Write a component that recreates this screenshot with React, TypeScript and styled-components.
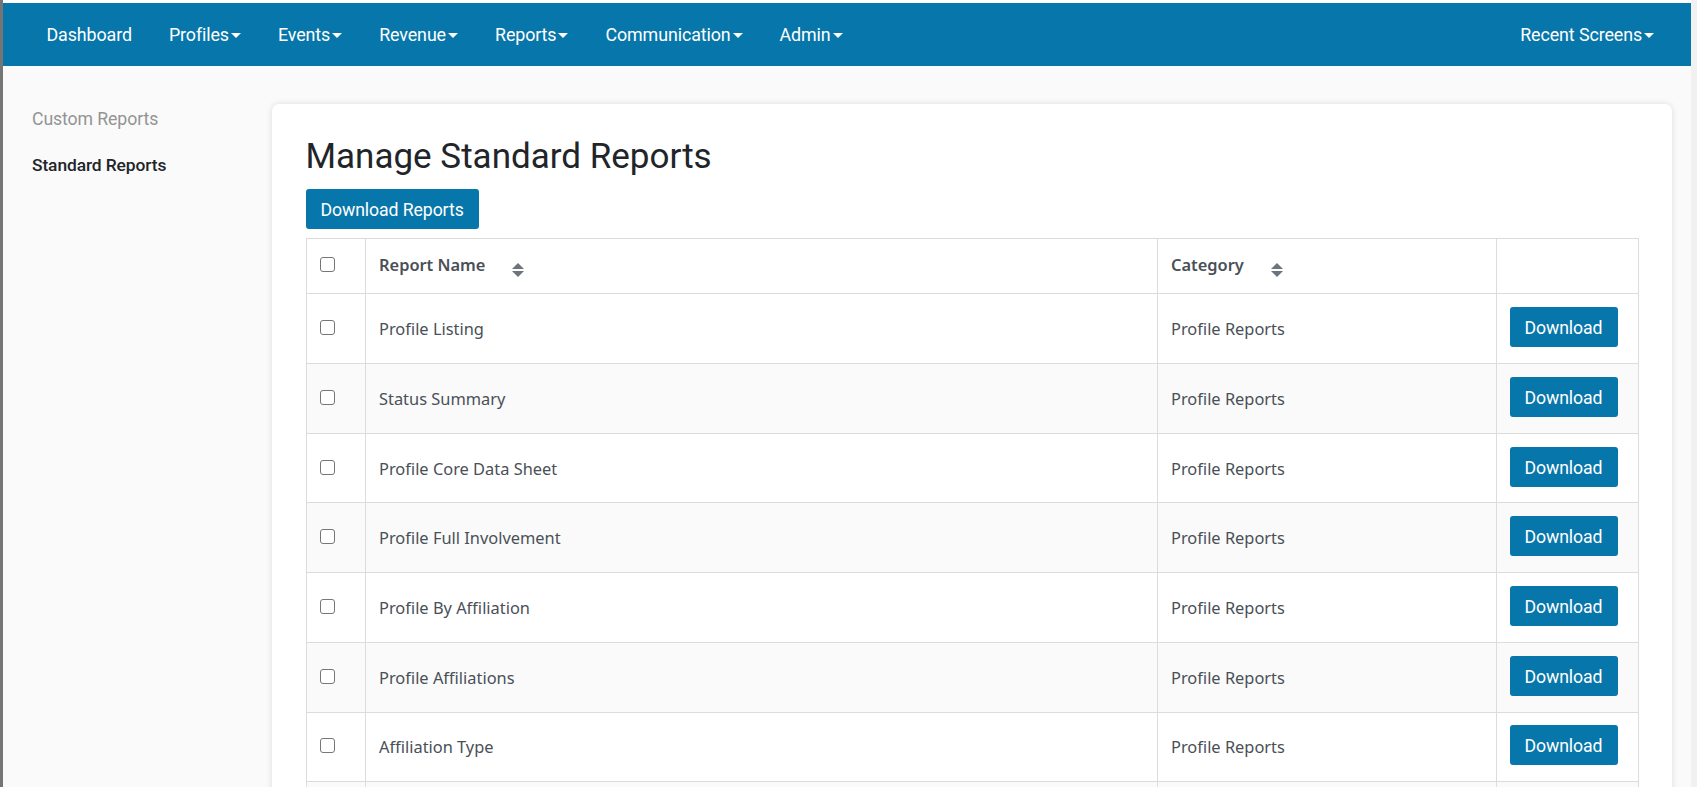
import React from 'react';
import styled, { createGlobalStyle } from 'styled-components';

const GlobalStyle = createGlobalStyle`
  html, body {
    margin: 0;
    height: 787px;
    overflow: hidden;
    background: #fff;
    font-family: Roboto, "Liberation Sans", sans-serif;
  }
  * { box-sizing: border-box; }
`;

const Page = styled.div`
  height: 787px;
  padding-top: 3px;
  border-left: 3px solid #757575;
  border-right: 6px solid #f1f1f1;
  overflow: hidden;
`;

const Frame = styled.div`
  height: 784px;
  background: #fafafa;
  display: flex;
  flex-direction: column;
`;

const NavBar = styled.nav`
  flex: none;
  height: 63px;
  background: #0776aa;
  display: flex;
  align-items: center;
  justify-content: space-between;
  padding: 0 37px 0 43.5px;
`;

const NavGroup = styled.div`
  display: flex;
  gap: 37px;
`;

const NavItem = styled.a`
  display: flex;
  align-items: center;
  color: #fff;
  font-size: 17.85px;
  letter-spacing: -0.1px;
  white-space: nowrap;
`;

const Caret = styled.span`
  width: 0;
  height: 0;
  margin-left: 2px;
  margin-top: 2px;
  border-left: 5px solid transparent;
  border-right: 5px solid transparent;
  border-top: 5px solid #fff;
`;

const Body = styled.div`
  flex: 1;
  min-height: 0;
  display: flex;
  align-items: flex-start;
  padding: 38px 19px 0 0;
`;

const Side = styled.aside`
  flex: none;
  width: 269px;
  padding: 4px 0 0 29px;
  display: flex;
  flex-direction: column;
  gap: 24px;
`;

const SideLink = styled.a<{ $active?: boolean }>`
  font-size: ${(p) => (p.$active ? '17.4px' : '17.7px')};
  line-height: 22px;
  letter-spacing: -0.1px;
  color: ${(p) => (p.$active ? '#212529' : '#949494')};
  font-weight: ${(p) => (p.$active ? 500 : 400)};
`;

const Card = styled.main`
  flex: 1;
  min-width: 0;
  background: #fff;
  border-radius: 7px;
  box-shadow: 0 0 6px rgba(0, 0, 0, 0.12);
  padding: 32px 33.5px 0 33.5px;
  height: 760px;
`;

const Title = styled.h1`
  margin: 0 0 11px;
  font-size: 35px;
  line-height: 42px;
  font-weight: 400;
  color: #212529;
`;

const Button = styled.button`
  display: block;
  height: 40px;
  padding: 2px 15px 0;
  border: 0;
  border-radius: 3px;
  background: #0776aa;
  color: #fff;
  font-family: Roboto, "Liberation Sans", sans-serif;
  font-size: 17.7px;
  letter-spacing: -0.1px;
  white-space: nowrap;
`;

const RowButton = styled(Button)`
  width: 108px;
  padding: 2px 0 0;
`;

const Table = styled.table`
  width: 100%;
  margin-top: 9px;
  border-collapse: collapse;
  table-layout: fixed;
  font-family: "Noto Sans", "Open Sans", sans-serif;
  color: #495057;
  font-size: 16.4px;
`;

const HeadRow = styled.tr`
  height: 55.4px;
`;

const Row = styled.tr<{ $alt: boolean }>`
  height: 69.7px;
  background: ${(p) => (p.$alt ? '#fafafa' : '#fff')};
`;

const Th = styled.th`
  border: 1.4px solid #dcdcdc;
  padding: 0 13.5px;
  text-align: left;
  font-weight: 600;
`;

const Td = styled.td`
  border: 1.4px solid #dcdcdc;
  padding: 0 13.5px;
`;

const ButtonCell = styled(Td)`
  padding: 0 0 3px 13px;
`;

const CheckCell = styled(Td)`
  padding: 0 0 2px 13px;
`;

const CheckHead = styled(Th)`
  padding: 0 0 3px 13px;
`;

const Check = styled.span`
  display: block;
  width: 15px;
  height: 15px;
  border: 1.4px solid #767676;
  border-radius: 3px;
  background: #fff;
`;

const HeadInner = styled.div`
  display: flex;
  align-items: center;
  padding-bottom: 3px;
`;

const Sort = styled.svg<{ $offset: number }>`
  margin-left: ${(p) => p.$offset}px;
  margin-top: 10px;
  width: 12px;
  height: 14px;
  fill: #6c757d;
`;

const SortIcon = ({ offset }: { offset: number }) => (
  <Sort $offset={offset} viewBox="0 0 12 14">
    <path d="M6 0 L12 6 H0 Z" />
    <path d="M0 8 H12 L6 14 Z" />
  </Sort>
);

const navItems = ['Profiles', 'Events', 'Revenue', 'Reports', 'Communication', 'Admin'];

const reports = [
  'Profile Listing',
  'Status Summary',
  'Profile Core Data Sheet',
  'Profile Full Involvement',
  'Profile By Affiliation',
  'Profile Affiliations',
  'Affiliation Type',
];

export default function App() {
  return (
    <Page>
      <GlobalStyle />
      <Frame>
        <NavBar>
          <NavGroup>
            <NavItem>Dashboard</NavItem>
            {navItems.map((item) => (
              <NavItem key={item}>
                {item}
                <Caret />
              </NavItem>
            ))}
          </NavGroup>
          <NavItem>
            Recent Screens
            <Caret />
          </NavItem>
        </NavBar>
        <Body>
          <Side>
            <SideLink>Custom Reports</SideLink>
            <SideLink $active>Standard Reports</SideLink>
          </Side>
          <Card>
            <Title>Manage Standard Reports</Title>
            <Button>Download Reports</Button>
            <Table>
              <colgroup>
                <col style={{ width: 59 }} />
                <col style={{ width: 792 }} />
                <col style={{ width: 339 }} />
                <col />
              </colgroup>
              <thead>
                <HeadRow>
                  <CheckHead>
                    <Check />
                  </CheckHead>
                  <Th>
                    <HeadInner>
                      Report Name
                      <SortIcon offset={27} />
                    </HeadInner>
                  </Th>
                  <Th>
                    <HeadInner>
                      Category
                      <SortIcon offset={27} />
                    </HeadInner>
                  </Th>
                  <Th />
                </HeadRow>
              </thead>
              <tbody>
                {reports.map((name, i) => (
                  <Row key={name} $alt={i % 2 === 1}>
                    <CheckCell>
                      <Check />
                    </CheckCell>
                    <Td>{name}</Td>
                    <Td>Profile Reports</Td>
                    <ButtonCell>
                      <RowButton>Download</RowButton>
                    </ButtonCell>
                  </Row>
                ))}
                <Row $alt>
                  <Td />
                  <Td />
                  <Td />
                  <Td />
                </Row>
              </tbody>
            </Table>
          </Card>
        </Body>
      </Frame>
    </Page>
  );
}
